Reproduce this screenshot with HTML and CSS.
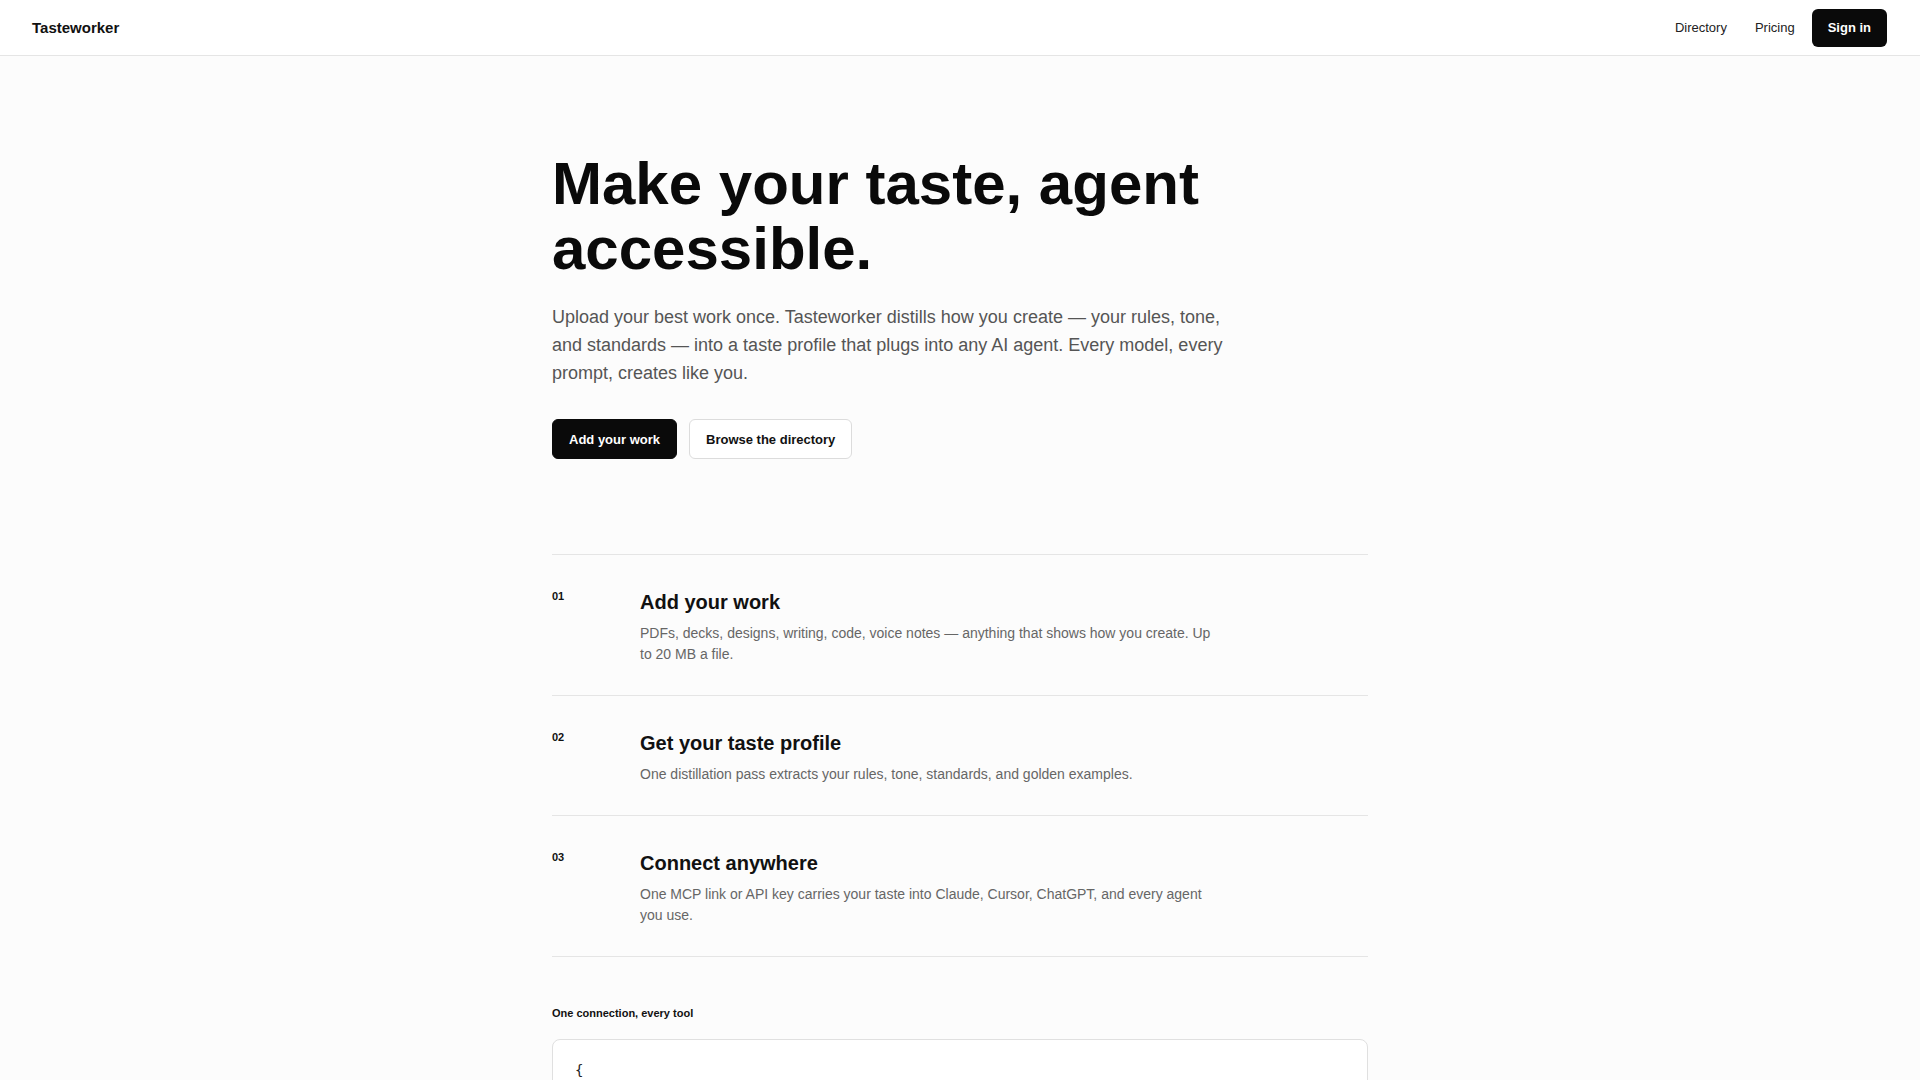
FILE: index.html
```html
<!DOCTYPE html>
<html lang="en">
<head>
<meta charset="utf-8">
<title>Tasteworker</title>
<link rel="stylesheet" href="styles.css">
</head>
<body>
<header class="topbar">
  <a class="logo" href="#">Tasteworker</a>
  <nav class="nav">
    <a class="nav-link" href="#">Directory</a>
    <a class="nav-link" href="#">Pricing</a>
    <a class="btn-signin" href="#">Sign in</a>
  </nav>
</header>
<main class="container">
  <section class="hero">
    <h1 class="hero-title">Make your taste, agent accessible.</h1>
    <p class="hero-text">Upload your best work once. Tasteworker distills how you create — your rules, tone, and standards — into a taste profile that plugs into any AI agent. Every model, every prompt, creates like you.</p>
    <div class="actions">
      <a class="btn btn-primary" href="#">Add your work</a>
      <a class="btn btn-secondary" href="#">Browse the directory</a>
    </div>
  </section>
  <section class="steps">
    <div class="step">
      <div class="step-num">01</div>
      <div class="step-body">
        <h2 class="step-title">Add your work</h2>
        <p class="step-text">PDFs, decks, designs, writing, code, voice notes — anything that shows how you create. Up to 20 MB a file.</p>
      </div>
    </div>
    <div class="step">
      <div class="step-num">02</div>
      <div class="step-body">
        <h2 class="step-title">Get your taste profile</h2>
        <p class="step-text">One distillation pass extracts your rules, tone, standards, and golden examples.</p>
      </div>
    </div>
    <div class="step">
      <div class="step-num">03</div>
      <div class="step-body">
        <h2 class="step-title">Connect anywhere</h2>
        <p class="step-text">One MCP link or API key carries your taste into Claude, Cursor, ChatGPT, and every agent you use.</p>
      </div>
    </div>
  </section>
  <section class="connect">
    <div class="connect-label">One connection, every tool</div>
    <pre class="code">{
  "mcpServers": {
    "tasteworker": {
      "url": "https://tasteworker.com/mcp/your-profile"
    }
  }
}</pre>
  </section>
</main>
</body>
</html>
```
FILE: styles.css
```css
* { box-sizing: border-box; }
html, body { margin: 0; padding: 0; }
body {
  background: #fcfcfc;
  color: #0a0a0a;
  font-family: "Liberation Sans", Arial, sans-serif;
}
a { text-decoration: none; color: inherit; }

.topbar {
  height: 56px;
  border-bottom: 1px solid #e5e5e5;
  background: #fff;
  display: flex;
  align-items: center;
  justify-content: space-between;
  padding: 0 33px 0 32px;
}
.logo {
  font-size: 15px;
  font-weight: 700;
  color: #111;
}
.nav {
  display: flex;
  align-items: center;
  gap: 4px;
}
.nav-link {
  font-size: 13px;
  color: #222;
  padding: 0 12px;
  line-height: 20px;
}
.btn-signin {
  margin-left: 1px;
  background: #0a0a0a;
  color: #fff;
  font-size: 13px;
  font-weight: 700;
  height: 38px;
  line-height: 38px;
  padding: 0 16px;
  border-radius: 6px;
}

.container {
  width: 816px;
  margin: 0 auto;
}
.hero {
  padding-top: 95px;
}
.hero-title {
  margin: 0;
  font-size: 60px;
  line-height: 65px;
  font-weight: 700;
  color: #0a0a0a;
}
.hero-text {
  margin: 22px 0 0;
  max-width: 672px;
  font-size: 18px;
  line-height: 28px;
  color: #555;
}
.actions {
  margin-top: 32px;
  display: flex;
  gap: 12px;
}
.btn {
  display: inline-flex;
  align-items: center;
  height: 40px;
  padding: 0 16px;
  border-radius: 6px;
  font-size: 13px;
  font-weight: 700;
  border: 1px solid transparent;
}
.btn-primary {
  background: #0a0a0a;
  color: #fff;
  border-color: #0a0a0a;
}
.btn-secondary {
  background: #fff;
  color: #111;
  border-color: #dcdcdc;
}

.steps {
  margin-top: 95px;
  border-top: 1px solid #e5e5e5;
}
.step {
  display: grid;
  grid-template-columns: 88px 1fr;
  padding: 33px 0 30px;
  border-bottom: 1px solid #e5e5e5;
}
.step-num {
  font-size: 11px;
  font-weight: 700;
  line-height: 16px;
  color: #111;
}
.step-title {
  margin: 0;
  font-size: 20px;
  line-height: 28px;
  font-weight: 700;
  color: #111;
}
.step-text {
  margin: 7px 0 0;
  max-width: 576px;
  font-size: 14px;
  line-height: 21px;
  color: #666;
}

.connect {
  margin-top: 48px;
}
.connect-label {
  font-size: 11px;
  line-height: 16px;
  font-weight: 700;
  color: #111;
}
.code {
  margin: 18px 0 0;
  padding: 20px 22px;
  background: #fff;
  border: 1px solid #e0e0e0;
  border-radius: 8px;
  font-family: "DejaVu Sans Mono", "Liberation Mono", monospace;
  font-size: 14px;
  line-height: 20px;
  color: #222;
}
```
